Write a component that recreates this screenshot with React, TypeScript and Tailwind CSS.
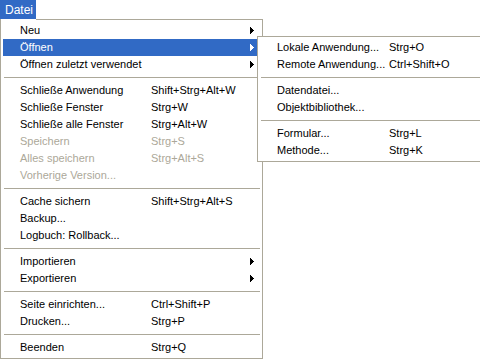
import React from "react";

type Item =
  | { sep: true }
  | { label: string; shortcut?: string; sub?: boolean; disabled?: boolean; active?: boolean };

const mainItems: Item[] = [
  { label: "Neu", sub: true },
  { label: "Öffnen", sub: true, active: true },
  { label: "Öffnen zuletzt verwendet", sub: true },
  { sep: true },
  { label: "Schließe Anwendung", shortcut: "Shift+Strg+Alt+W" },
  { label: "Schließe Fenster", shortcut: "Strg+W" },
  { label: "Schließe alle Fenster", shortcut: "Strg+Alt+W" },
  { label: "Speichern", shortcut: "Strg+S", disabled: true },
  { label: "Alles speichern", shortcut: "Strg+Alt+S", disabled: true },
  { label: "Vorherige Version...", disabled: true },
  { sep: true },
  { label: "Cache sichern", shortcut: "Shift+Strg+Alt+S" },
  { label: "Backup..." },
  { label: "Logbuch: Rollback..." },
  { sep: true },
  { label: "Importieren", sub: true },
  { label: "Exportieren", sub: true },
  { sep: true },
  { label: "Seite einrichten...", shortcut: "Ctrl+Shift+P" },
  { label: "Drucken...", shortcut: "Strg+P" },
  { sep: true },
  { label: "Beenden", shortcut: "Strg+Q" },
];

const subItems: Item[] = [
  { label: "Lokale Anwendung...", shortcut: "Strg+O" },
  { label: "Remote Anwendung...", shortcut: "Ctrl+Shift+O" },
  { sep: true },
  { label: "Datendatei..." },
  { label: "Objektbibliothek..." },
  { sep: true },
  { label: "Formular...", shortcut: "Strg+L" },
  { label: "Methode...", shortcut: "Strg+K" },
];

function Arrow({ white }: { white?: boolean }) {
  const c = white ? "#ffffff" : "#000000";
  return (
    <svg width="4" height="7" viewBox="0 0 4 7" shapeRendering="crispEdges" className="block">
      <rect x="0" y="0" width="1" height="7" fill={c} />
      <rect x="1" y="1" width="1" height="5" fill={c} />
      <rect x="2" y="2" width="1" height="3" fill={c} />
      <rect x="3" y="3" width="1" height="1" fill={c} />
    </svg>
  );
}

function MenuList({ items, labelW }: { items: Item[]; labelW: string }) {
  return (
    <>
      {items.map((it, i) =>
        "sep" in it ? (
          <div key={i} className="h-[9px] pl-[1px] flex items-center">
            <div className="h-px w-full bg-[#aca899]" />
          </div>
        ) : (
          <div
            key={i}
            className={
              "h-[17px] flex items-center pl-[17px] whitespace-nowrap " +
              (it.active ? "bg-[#316ac5] text-white" : it.disabled ? "text-[#aca899]" : "text-black")
            }
          >
            <div className={labelW}>{it.label}</div>
            <div className="flex-1">{it.shortcut ?? ""}</div>
            {it.sub ? (
              <div className="mr-[6px]">
                <Arrow white={it.active} />
              </div>
            ) : null}
          </div>
        )
      )}
    </>
  );
}

export default function App() {
  return (
    <div
      className="relative w-[480px] h-[359px] bg-white overflow-hidden text-[11px] leading-none"
      style={{ fontFamily: '"Liberation Sans", Arial, sans-serif' }}
    >
      <div className="h-[19px] w-[36px] bg-[#316ac5] text-white flex items-center pl-[5px] text-[12px]">Datei</div>
      <div className="w-[263px] border-l border-r border-b border-[#aca899]">
        <div className="flex h-px">
          <div className="w-[35px]" />
          <div className="flex-1 bg-[#aca899]" />
        </div>
        <div className="p-[2px]">
          <MenuList items={mainItems} labelW="w-[131px]" />
        </div>
      </div>
      <div className="absolute left-[257px] top-[36px] w-[226px] border border-[#aca899] bg-white p-[2px]">
        <MenuList items={subItems} labelW="w-[112px]" />
      </div>
    </div>
  );
}
